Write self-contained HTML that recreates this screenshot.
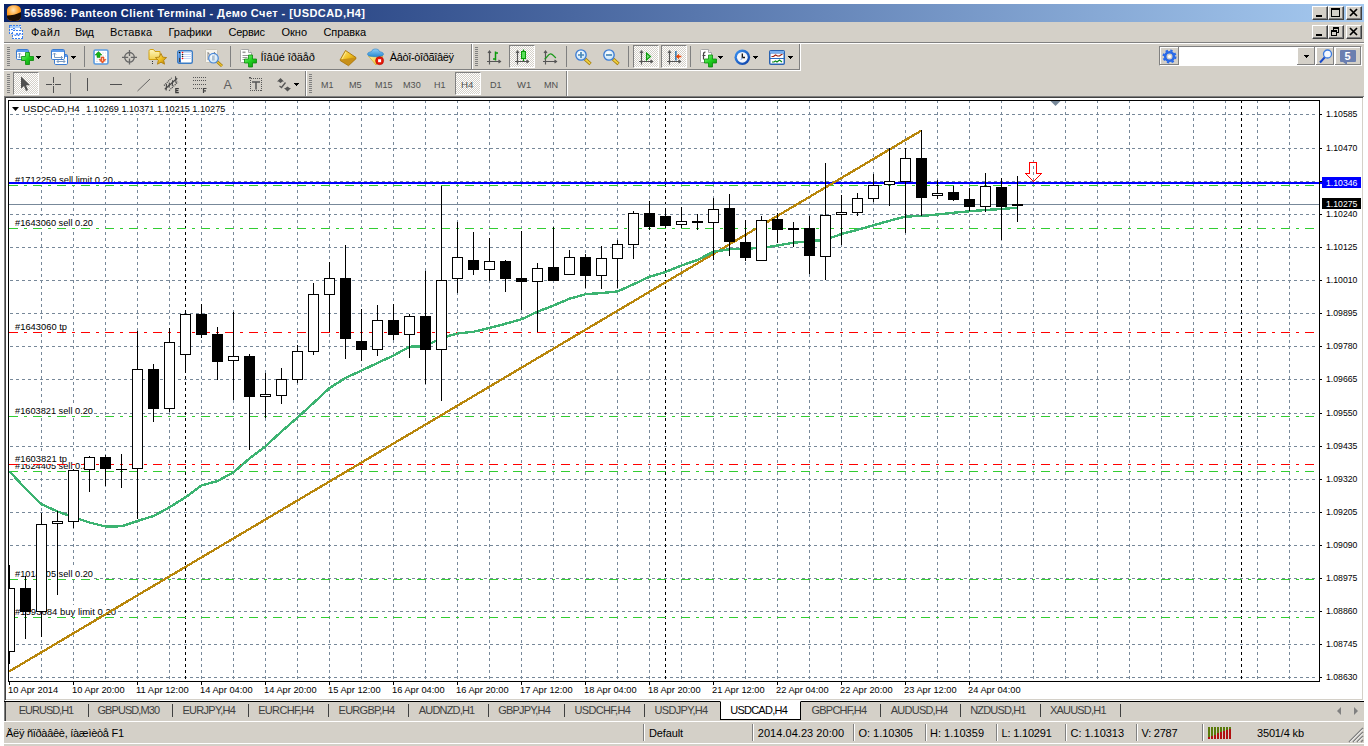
<!DOCTYPE html><html lang="ru"><head><meta charset="utf-8"><title>565896: Panteon Client Terminal</title><style>
html,body{margin:0;padding:0}
body{width:1368px;height:746px;background:#fff;overflow:hidden;position:relative;font-family:"Liberation Sans",sans-serif}
.win{position:absolute;left:4px;top:4px;width:1360px;height:742px;background:#d4d0c8}
.t{position:absolute;white-space:pre;line-height:1;font-family:"Liberation Sans",sans-serif}
.abs{position:absolute}
.title{position:absolute;left:4px;top:4px;width:1360px;height:18px;background:linear-gradient(to right,#0a246a 0%,#0a246a 2%,#a6caf0 100%)}
.btn{position:absolute;width:16px;height:14px;background:#d4d0c8;box-sizing:border-box;border:1px solid;border-color:#fff #404040 #404040 #fff;box-shadow:inset -1px -1px 0 #808080}
.hl{position:absolute;height:1px}
.vl{position:absolute;width:1px}
.grip{position:absolute;width:3px;background:repeating-linear-gradient(to bottom,#808080 0,#808080 1px,#d4d0c8 1px,#d4d0c8 2px)}
.chk{position:absolute;box-sizing:border-box;background:repeating-conic-gradient(#fff 0 25%,#d4d0c8 0 50%) 0 0/2px 2px;border:1px solid;border-color:#808080 #fff #fff #808080}
.chart{position:absolute;left:0;top:0}
.arr{position:absolute;width:5px;height:3px;background:linear-gradient(#000,#000) 0 0/5px 1px no-repeat,linear-gradient(#000,#000) 1px 1px/3px 1px no-repeat,linear-gradient(#000,#000) 2px 2px/1px 1px no-repeat}
.sep{position:absolute;width:1px;background:#808080;box-shadow:1px 0 0 #fff}
svg.ic{position:absolute;overflow:visible}
</style></head><body>
<div class="win"></div>
<svg width="0" height="0" style="position:absolute"><defs>
<linearGradient id="gGreen" x1="0" y1="0" x2="1" y2="1"><stop offset="0" stop-color="#8cf58c"/><stop offset=".5" stop-color="#1fd01f"/><stop offset="1" stop-color="#0a8f0a"/></linearGradient>
<linearGradient id="gGold" x1="0" y1="0" x2="1" y2="1"><stop offset="0" stop-color="#ffe98a"/><stop offset=".5" stop-color="#f0c020"/><stop offset="1" stop-color="#b07a08"/></linearGradient>
<linearGradient id="gBlueV" x1="0" y1="0" x2="0" y2="1"><stop offset="0" stop-color="#6aa8ee"/><stop offset="1" stop-color="#2a6ac4"/></linearGradient>
<radialGradient id="gLens" cx=".4" cy=".35" r=".7"><stop offset="0" stop-color="#ffffff"/><stop offset="1" stop-color="#bfe0f8"/></radialGradient>
<radialGradient id="gOrange" cx=".45" cy=".3" r=".7"><stop offset="0" stop-color="#ffe4b8"/><stop offset=".6" stop-color="#ff9c20"/><stop offset="1" stop-color="#f07800"/></radialGradient>
<linearGradient id="gClock" x1="0" y1="0" x2="1" y2="1"><stop offset="0" stop-color="#3a96f8"/><stop offset="1" stop-color="#0a3aa0"/></linearGradient>
<linearGradient id="gHat" x1="0" y1="0" x2="0" y2="1"><stop offset="0" stop-color="#8fd0f8"/><stop offset="1" stop-color="#2a8ad0"/></linearGradient>
<linearGradient id="gFace" x1="0" y1="0" x2="1" y2="1"><stop offset="0" stop-color="#fff3a0"/><stop offset="1" stop-color="#e8b818"/></linearGradient>
<linearGradient id="gFolder" x1="0" y1="0" x2="0" y2="1"><stop offset="0" stop-color="#fff8c0"/><stop offset="1" stop-color="#f0d050"/></linearGradient>
</defs></svg>
<div class="title"></div>
<svg class="ic" style="left:6px;top:5px" width="16" height="17" viewBox="0 0 16 17"><path d="M1 5.5C1 2 4 .3 8 .3s7 1.700 7 5.200v6.500c0 2.500-3 4-7 4s-7-1.500-7-4z" fill="url(#gOrange)"/><path d="M1 10.500C5 10.500 11 9.500 15 7v5c0 2.500-3 4-7 4s-7-1.500-7-4z" fill="#1c0e04"/></svg>
<span class="t" style="left:24.00px;top:8px;font-size:11px;color:#fff;letter-spacing:0.432px;font-weight:bold;">565896: Panteon Client Terminal - Демо Счет - [USDCAD,H4]</span>
<div class="btn" style="left:1312px;top:6px"></div><svg class="ic" style="left:1312px;top:6px" width="16" height="14" viewBox="0 0 16 14"><rect x="4" y="9" width="6" height="2" fill="#000" shape-rendering="crispEdges"/></svg>
<div class="btn" style="left:1328px;top:6px"></div><svg class="ic" style="left:1328px;top:6px" width="16" height="14" viewBox="0 0 16 14"><g shape-rendering="crispEdges"><rect x="3.500" y="2.500" width="8" height="8" fill="none" stroke="#000"/><rect x="3" y="2" width="9" height="2" fill="#000"/></g></svg>
<div class="btn" style="left:1346px;top:6px"></div><svg class="ic" style="left:1346px;top:6px" width="16" height="14" viewBox="0 0 16 14"><path d="M4 3l7 7m0-7l-7 7" stroke="#000" stroke-width="1.700" fill="none"/></svg>
<svg class="ic" style="left:8px;top:24px" width="15" height="15" viewBox="0 0 15 15"><g shape-rendering="crispEdges"><rect x="1.500" y="1.500" width="11" height="8" fill="#f4f8ff" stroke="#3a80f0" stroke-dasharray="2 1"/><rect x="2" y="2" width="10" height="2" fill="#a8ccf8"/><rect x="4.500" y="6.500" width="10" height="8" fill="#fff" stroke="#3a80f0" stroke-dasharray="2 1"/></g><path d="M6 10.500l1.500 1.500l1.500-3l1.500 3l1.500-3l1 1.500" fill="none" stroke="#2a70f0" stroke-width="1"/><path d="M3 5.500h1.500l1.500-1.500l1 1.500" fill="none" stroke="#2a70f0" stroke-width="1"/></svg>
<span class="t" style="left:31.00px;top:27px;font-size:11px;color:#000;letter-spacing:0.652px;">Файл</span>
<span class="t" style="left:75.00px;top:27px;font-size:11px;color:#000;letter-spacing:-0.450px;">Вид</span>
<span class="t" style="left:110.00px;top:27px;font-size:11px;color:#000;letter-spacing:0.186px;">Вставка</span>
<span class="t" style="left:168.50px;top:27px;font-size:11px;color:#000;letter-spacing:-0.038px;">Графики</span>
<span class="t" style="left:228.50px;top:27px;font-size:11px;color:#000;letter-spacing:-0.233px;">Сервис</span>
<span class="t" style="left:281.50px;top:27px;font-size:11px;color:#000;letter-spacing:-0.020px;">Окно</span>
<span class="t" style="left:323.50px;top:27px;font-size:11px;color:#000;letter-spacing:-0.109px;">Справка</span>
<div class="btn" style="left:1312px;top:25px"></div><svg class="ic" style="left:1312px;top:25px" width="16" height="14" viewBox="0 0 16 14"><rect x="4" y="9" width="6" height="2" fill="#000" shape-rendering="crispEdges"/></svg>
<div class="btn" style="left:1328px;top:25px"></div><svg class="ic" style="left:1328px;top:25px" width="16" height="14" viewBox="0 0 16 14"><g shape-rendering="crispEdges" fill="none" stroke="#000"><rect x="5.500" y="2.500" width="5" height="5"/><rect x="5" y="2" width="6" height="2" fill="#000" stroke="none"/><rect x="3.500" y="5.500" width="5" height="5" fill="#d4d0c8"/><rect x="3" y="5" width="6" height="2" fill="#000" stroke="none"/></g></svg>
<div class="btn" style="left:1346px;top:25px"></div><svg class="ic" style="left:1346px;top:25px" width="16" height="14" viewBox="0 0 16 14"><path d="M4 3l7 7m0-7l-7 7" stroke="#000" stroke-width="1.700" fill="none"/></svg>
<div class="hl" style="left:4px;top:42px;width:1360px;background:#808080"></div><div class="hl" style="left:4px;top:43px;width:1360px;background:#fff"></div>
<div class="hl" style="left:4px;top:69px;width:796px;background:#808080"></div><div class="hl" style="left:4px;top:70px;width:797px;background:#fff"></div>
<div class="vl" style="left:799px;top:44px;height:26px;background:#808080"></div><div class="vl" style="left:800px;top:44px;height:27px;background:#fff"></div>
<div class="grip" style="left:7px;top:47px;height:19px"></div>
<div class="sep" style="left:471px;top:44px;height:25px"></div>
<div class="grip" style="left:475px;top:47px;height:19px"></div>
<div class="sep" style="left:84px;top:46px;height:21px;box-shadow:none"></div>
<div class="sep" style="left:230px;top:46px;height:21px;box-shadow:none"></div>
<div class="sep" style="left:566px;top:46px;height:21px;box-shadow:none"></div>
<div class="sep" style="left:628px;top:46px;height:21px;box-shadow:none"></div>
<div class="sep" style="left:690px;top:46px;height:21px;box-shadow:none"></div>
<div class="chk" style="left:509px;top:45px;width:26px;height:23px"></div>
<div class="chk" style="left:633px;top:45px;width:26px;height:23px"></div>
<div class="chk" style="left:661px;top:45px;width:26px;height:23px"></div>
<svg class="ic" style="left:16px;top:49px" width="18" height="16" viewBox="0 0 18 16"><rect x="0.5" y="0.5" width="12" height="10" rx="1.200" fill="#fff" stroke="#3a7bd0"/><rect x="1" y="1" width="11" height="2" fill="#5a9aee"/><path d="M3.500 4v5M2 5.500l1.500-1.500l1.500 1.500M2 7.500l1.500 1.500l1.500-1.500" stroke="#7a9ac0" fill="none"/><path d="M9.5 3.5h4v4h4v4h-4v4h-4v-4h-4v-4h4z" fill="url(#gGreen)" stroke="#0a8a0a" stroke-width=".8"/></svg>
<svg class="ic" style="left:51px;top:49px" width="18" height="16" viewBox="0 0 18 16"><rect x="3.5" y="5.5" width="13" height="10" rx="1.200" fill="#fff" stroke="#3a7bd0"/><rect x="4" y="6" width="12" height="2" fill="#5a9aee"/><path d="M6 12.500h8M7.500 11l-1.500 1.500l1.500 1.500M12.500 11l1.500 1.500l-1.500 1.500" stroke="#7a9ac0" fill="none"/><rect x="0.5" y="0.5" width="13" height="10" rx="1.200" fill="#fff" stroke="#3a7bd0"/><rect x="1" y="1" width="12" height="2" fill="#5a9aee"/><path d="M3.500 4v4.500M2 5.500l1.500-1.500l1.500 1.500M3.500 8.500h8M10 7l1.500 1.500l-1.500 1.500" stroke="#7a9ac0" fill="none"/></svg>
<svg class="ic" style="left:93px;top:49px" width="16" height="16" viewBox="0 0 16 16"><rect x="1" y="1" width="14" height="14" rx="1.500" fill="#fff" stroke="#5a9be0" stroke-width="1.600"/><path d="M3 4h10M3 7h10M3 10h10M3 12.500h10" stroke="#dde0e4" stroke-width="1" stroke-dasharray="2 1"/><path d="M5.500 2.500l3.500 3.500h-2v2.500h-3v-2.500h-2z" fill="#18b018" stroke="#0a8a0a" stroke-width=".5"/><path d="M9.500 14.200l-3.500-3.700h2v-2.500h3v2.500h2z" fill="#f06030" stroke="#d04010" stroke-width=".5"/><path d="M9.500 9v3" stroke="#ffc8a8" stroke-width="1"/></svg>
<svg class="ic" style="left:122px;top:49px" width="16" height="16" viewBox="0 0 16 16"><circle cx="7.500" cy="8.300" r="4.800" fill="none" stroke="#666" stroke-width="1.300"/><path d="M7.500 1v6M7.500 9.600v6M0 8.300h6.200M8.800 8.300h6.200" stroke="#666" stroke-width="1.300"/></svg>
<svg class="ic" style="left:148px;top:48px" width="19" height="18" viewBox="0 0 19 18"><path d="M1 3.500c0-1.500.5-2 2-2h2.500l1.500 2h5v8h-11z" fill="url(#gFolder)" stroke="#d0a010" stroke-width="1"/><path d="M4.500 13v1M4.500 15v1" stroke="#333" stroke-width="1"/><path d="M13 5.500l1.700 3.600l3.900.5l-2.900 2.700l.8 3.900l-3.500-2l-3.500 2l.8-3.900l-2.900-2.700l3.900-.5z" fill="url(#gGold)" stroke="#b08010" stroke-width=".9"/></svg>
<svg class="ic" style="left:177px;top:50px" width="16" height="14" viewBox="0 0 16 14"><rect x=".7" y=".7" width="14.600" height="12.600" rx="1.500" fill="#fff" stroke="#3b7cc4" stroke-width="1.400"/><rect x="1.400" y="1.400" width="2.600" height="11.200" fill="url(#gBlueV)"/><rect x="2" y="8" width="1" height="4" fill="#444"/><path d="M5 2.500h9.500M5 4.500h9.500M5 6.500h9.500M5 8.500h9.500" stroke="#c8d8f8" stroke-width="1"/><circle cx="2.500" cy="2.500" r=".8" fill="#000"/><circle cx="5.500" cy="2.500" r=".8" fill="#f00"/><circle cx="5.500" cy="4.500" r=".8" fill="#222"/><circle cx="5.500" cy="6.500" r=".8" fill="#222"/><circle cx="5.500" cy="8.500" r=".8" fill="#f00"/></svg>
<svg class="ic" style="left:205px;top:49px" width="18" height="18" viewBox="0 0 18 18"><rect x=".5" y=".5" width="12" height="13" rx="1" fill="#f6f4ee" stroke="#c8c4b8"/><path d="M3 3v8M3 4l2 1.500M9.500 3v8M9.500 4l2 1.500" stroke="#888" fill="none"/><path d="M12 12.500l5 4.500" stroke="#a07808" stroke-width="3"/><path d="M12 12.500l5 4.500" stroke="#e8c030" stroke-width="1.600"/><circle cx="8.500" cy="9.200" r="4.800" fill="url(#gLens)" fill-opacity=".85" stroke="#4a88d8" stroke-width="1.200"/><rect x="7" y="6.500" width="2.500" height="5" fill="#9ab0c8" opacity=".8"/></svg>
<svg class="ic" style="left:240px;top:49px" width="17" height="18" viewBox="0 0 17 18"><path d="M.5 1.500c0-.6.400-1 1-1h7l3 3v9c0 .6-.4 1-1 1h-9c-.6 0-1-.4-1-1z" fill="#fff" stroke="#a8a8a8"/><path d="M8.500 .5v3h3" fill="#e8e8e8" stroke="#a8a8a8"/><rect x="2.500" y="2.500" width="3" height="1.600" fill="#999"/><path d="M2.500 6.500h6M2.500 8.500h5M2.500 10.500h4" stroke="#999"/><path d="M8.5 6h4v4h4v4h-4v4h-4v-4h-4v-4h4z" fill="url(#gGreen)" stroke="#0a8a0a" stroke-width=".8"/></svg>
<svg class="ic" style="left:340px;top:50px" width="17" height="16" viewBox="0 0 17 16"><path d="M5.500 .5l10.500 7l-7.500 7l-8.200-5z" fill="url(#gGold)" stroke="#a87408" stroke-width=".9"/><path d="M16 7.500v1.200l-7.500 7l-8.200-5v-1.200" fill="#c89018" stroke="#a87408" stroke-width=".8"/><path d="M6 2l-4 7" stroke="#fff4b0" stroke-width="1" opacity=".7"/></svg>
<svg class="ic" style="left:367px;top:48px" width="18" height="18" viewBox="0 0 18 18"><path d="M1.500 8h14.500l-7 9z" fill="url(#gFace)" stroke="#d0a010" stroke-width=".6"/><path d="M.5 6.200c0-1.800 2.500-2.200 4-2.700c.5-1.800 2-2.500 4-2.500s3.500.7 4 2.500c1.500.5 4 .9 4 2.700c0 1.800-3.500 2.500-8 2.500s-8-.7-8-2.500z" fill="url(#gHat)" stroke="#2a80c8" stroke-width=".6"/><circle cx="12.600" cy="12.700" r="4" fill="#e81808" stroke="#b00800" stroke-width=".6"/><rect x="11.100" y="11.200" width="3" height="3" fill="#fff"/></svg>
<svg class="ic" style="left:487px;top:50px" width="15" height="15" viewBox="0 0 15 15"><path d="M2.500 14.500V1M1 3l1.500-2l1.500 2M0 11.500h13.500M11.500 10l2 1.500l-2 1.500" fill="none" stroke="#555" stroke-width="1.150"/><path d="M8.500 1.500v9M8.500 3h2.500M6 9h2.500" fill="none" stroke="#0a9a0a" stroke-width="1.500"/></svg>
<svg class="ic" style="left:515px;top:49px" width="15" height="16" viewBox="0 0 15 16"><g transform="translate(0,1)"><path d="M2.500 14.500V1M1 3l1.500-2l1.500 2M0 11.500h13.500M11.500 10l2 1.500l-2 1.500" fill="none" stroke="#555" stroke-width="1.150"/></g><path d="M8.500 .5v11.500" stroke="#0a9a0a" stroke-width="1.300"/><rect x="6.500" y="2.500" width="4" height="7" fill="#5ae05a" stroke="#0a9a0a" stroke-width="1"/></svg>
<svg class="ic" style="left:543px;top:50px" width="15" height="15" viewBox="0 0 15 15"><path d="M2.500 14.500V1M1 3l1.500-2l1.500 2M0 11.500h13.500M11.500 10l2 1.500l-2 1.500" fill="none" stroke="#555" stroke-width="1.150"/><path d="M1.500 9c2.500-1 3.500-5 6-5.200s3 3 5.500 4" fill="none" stroke="#1a9a1a" stroke-width="1.300"/></svg>
<svg class="ic" style="left:575px;top:49px" width="17" height="17" viewBox="0 0 17 17"><path d="M10 10l5.500 5" stroke="#a07808" stroke-width="3.400"/><path d="M10.500 10.500l4.700 4.200" stroke="#f0d040" stroke-width="1.800"/><circle cx="6" cy="6" r="5.200" fill="url(#gLens)" stroke="#3a7bd4" stroke-width="1.300"/><path d="M3 6h6M6 3v6" stroke="#4a88b8" stroke-width="1.700"/></svg>
<svg class="ic" style="left:603px;top:49px" width="17" height="17" viewBox="0 0 17 17"><path d="M10 10l5.500 5" stroke="#a07808" stroke-width="3.400"/><path d="M10.500 10.500l4.700 4.200" stroke="#f0d040" stroke-width="1.800"/><circle cx="6" cy="6" r="5.200" fill="url(#gLens)" stroke="#3a7bd4" stroke-width="1.300"/><path d="M3 6h6" stroke="#4a88b8" stroke-width="1.700"/></svg>
<svg class="ic" style="left:639px;top:50px" width="15" height="15" viewBox="0 0 15 15"><path d="M2.500 14.500V1M1 3l1.500-2l1.500 2M0 11.500h13.500M11.500 10l2 1.500l-2 1.500" fill="none" stroke="#555" stroke-width="1.150"/><path d="M7.500 3l4 3.500l-4 3.500z" fill="#7ae07a" stroke="#0a9a0a" stroke-width="1.100"/></svg>
<svg class="ic" style="left:667px;top:50px" width="15" height="15" viewBox="0 0 15 15"><path d="M2.500 14.500V1M1 3l1.500-2l1.500 2M0 11.500h13.500M11.500 10l2 1.500l-2 1.500" fill="none" stroke="#555" stroke-width="1.150"/><path d="M8.900 1v9.500" stroke="#1a6aa8" stroke-width="1.400"/><path d="M9.800 6.500h4.500M12 4.500l-2.200 2l2.200 2" fill="none" stroke="#e84808" stroke-width="1.300"/></svg>
<svg class="ic" style="left:700px;top:49px" width="17" height="18" viewBox="0 0 17 18"><path d="M.5 1.500c0-.6.400-1 1-1h7l3 3v9c0 .6-.4 1-1 1h-9c-.6 0-1-.4-1-1z" fill="#fff" stroke="#a8a8a8"/><path d="M8.500 .5v3h3" fill="#e8e8e8" stroke="#a8a8a8"/><path d="M5.500 3c-2 0-2 1-2 2.500v5" fill="none" stroke="#444" stroke-width="1.200"/><path d="M2.500 6.500h3" stroke="#444"/><path d="M8.5 6h4v4h4v4h-4v4h-4v-4h-4v-4h4z" fill="url(#gGreen)" stroke="#0a8a0a" stroke-width=".8"/></svg>
<svg class="ic" style="left:734px;top:49px" width="17" height="17" viewBox="0 0 17 17"><circle cx="8.300" cy="8.300" r="7.800" fill="url(#gClock)"/><circle cx="8.300" cy="8.300" r="5.400" fill="#f4f6fa"/><path d="M8.300 4.500v4h2.700" fill="none" stroke="#111" stroke-width="1.300"/><path d="M8.300 8.500l-1.500 2.500" stroke="#6a9ae8" stroke-width=".8"/></svg>
<svg class="ic" style="left:769px;top:50px" width="16" height="15" viewBox="0 0 16 15"><rect x=".5" y=".5" width="15" height="14" rx="1" fill="#2a6ac0" stroke="#2a62b0"/><rect x="1" y="1" width="14" height="2" fill="#7ab0f0"/><rect x="1.500" y="3.500" width="13" height="4.500" fill="#fff"/><rect x="1.500" y="9" width="13" height="4.500" fill="#fff"/><path d="M2.500 6.500h2l2-1.500l2 1h2l2-1.500h1" fill="none" stroke="#a02010" stroke-width="1.200"/><path d="M3 12h2l1.500-1l1.500 1l2.500-2l2.500 2" fill="none" stroke="#0a8a1a" stroke-width="1.200"/></svg>
<div class="arr" style="left:36px;top:56px"></div>
<div class="arr" style="left:71px;top:56px"></div>
<div class="arr" style="left:718px;top:56px"></div>
<div class="arr" style="left:753px;top:56px"></div>
<div class="arr" style="left:788px;top:56px"></div>
<span class="t" style="left:260.60px;top:52px;font-size:11px;color:#000;letter-spacing:-0.065px;">Íîâûé îðäåð</span>
<span class="t" style="left:389.80px;top:52px;font-size:11px;color:#000;letter-spacing:-0.358px;">Àâòî-òîðãîâëÿ</span>
<div class="abs" style="left:1159px;top:46px;width:203px;height:20px;background:#fff;box-sizing:border-box;border:1px solid;border-color:#808080 #fff #fff #808080"></div>
<div class="abs" style="left:1160px;top:47px;width:19px;height:18px;background:#d4d0c8;box-shadow:inset -1px -1px 0 #808080,inset 1px 1px 0 #fff"></div>
<div class="abs" style="left:1297px;top:47px;width:18px;height:18px;background:#d4d0c8;box-shadow:inset -1px -1px 0 #808080,inset 1px 1px 0 #fff"></div>
<div class="abs" style="left:1316px;top:47px;width:18px;height:18px;background:#d4d0c8;box-shadow:inset -1px -1px 0 #808080,inset 1px 1px 0 #fff"></div>
<div class="abs" style="left:1335px;top:47px;width:26px;height:18px;background:#d4d0c8;box-shadow:inset -1px -1px 0 #808080,inset 1px 1px 0 #fff"></div>
<div class="arr" style="left:1304px;top:55px"></div>
<svg class="ic" style="left:1162px;top:49px" width="15" height="15" viewBox="0 0 15 15"><circle cx="7.500" cy="7.500" r="4.300" fill="none" stroke="#2a6ae8" stroke-width="2.600"/><circle cx="7.500" cy="7.500" r="6" fill="none" stroke="#2a6ae8" stroke-width="2" stroke-dasharray="2.360 2.360"/><circle cx="7.500" cy="7.500" r="1.600" fill="#fff"/></svg>
<svg class="ic" style="left:1319px;top:49px" width="14" height="14" viewBox="0 0 14 14"><path d="M6.500 7.500l-5.500 6" stroke="#1a4ac8" stroke-width="2"/><circle cx="8.500" cy="5" r="4" fill="#f4f8ff" stroke="#3a7be0" stroke-width="1.300"/></svg>
<div class="abs" style="left:1340px;top:50px;width:16px;height:12px;background:#6b7fb0;border-radius:1px"></div>
<div class="abs" style="left:1343px;top:62px;width:0;height:0;border-top:3px solid #6b7fb0;border-left:4px solid transparent"></div>
<span class="t" style="left:1344.50px;top:51px;font-size:11px;color:#fff;font-weight:bold;">5</span>
<div class="grip" style="left:7px;top:74px;height:19px"></div>
<div class="chk" style="left:13px;top:72px;width:26px;height:23px"></div>
<div class="sep" style="left:70px;top:73px;height:21px;box-shadow:none"></div>
<div class="sep" style="left:305px;top:71px;height:25px"></div>
<div class="grip" style="left:309px;top:74px;height:19px"></div>
<div class="chk" style="left:455px;top:72px;width:26px;height:23px"></div>
<div class="sep" style="left:566px;top:71px;height:25px"></div>
<svg class="ic" style="left:20px;top:76px" width="10" height="16" viewBox="0 0 10 16"><path d="M1 .5v12l3-2.500l2 5l2-.9l-2-4.800h4z" fill="#505050"/></svg>
<svg class="ic" style="left:46px;top:77px" width="16" height="16" viewBox="0 0 16 16"><path d="M7.500 0v6M7.500 9v6.500M0 7.500h6M9 7.500h6M7 7.500h1" stroke="#505050" stroke-width="1" fill="none" shape-rendering="crispEdges"/></svg>
<svg class="ic" style="left:87px;top:78px" width="2" height="13" viewBox="0 0 2 13"><rect x="0" y="0" width="1" height="13" fill="#505050" shape-rendering="crispEdges"/></svg>
<svg class="ic" style="left:110px;top:84px" width="12" height="2" viewBox="0 0 12 2"><rect x="0" y="0" width="12" height="1" fill="#505050" shape-rendering="crispEdges"/></svg>
<svg class="ic" style="left:137px;top:79px" width="14" height="13" viewBox="0 0 14 13"><path d="M.5 12L13 0" stroke="#505050" stroke-width=".85"/></svg>
<svg class="ic" style="left:164px;top:76px" width="16" height="17" viewBox="0 0 16 17"><path d="M0 9.500L7.700 1.800M5.100 14.600L13.900 5.900" stroke="#444" stroke-width="1.200" stroke-dasharray="1.100 .900"/><path d="M.8 13.200L13.200 2.200" stroke="#4a4a4a" stroke-width="1.300"/><path d="M2.500 8l-.3 6.600M5.400 6.600l-.3 5.100M8.600 4.200l-.3 5.800M11.500 .2l.5 6.800" stroke="#4a4a4a" stroke-width="1.100"/><path d="M14.800 12.600h-3v4h3M11.800 14.600h2.600" stroke="#3a3a3a" stroke-width="1.200" fill="none"/></svg>
<svg class="ic" style="left:193px;top:77px" width="15" height="17" viewBox="0 0 15 17"><g fill="none" stroke="#555" stroke-width="1" stroke-dasharray="1 1" shape-rendering="crispEdges"><path d="M0 .5h13M0 3.500h13M0 7.500h13M0 11.500h9"/></g><path d="M10.500 16v-4.500h3M10.500 13.800h2.500" stroke="#444" stroke-width="1.200" fill="none"/></svg>
<svg class="ic" style="left:249px;top:77px" width="13" height="14" viewBox="0 0 13 14"><rect x="1.500" y="1.500" width="11" height="12" fill="none" stroke="#555" stroke-dasharray="1 1" shape-rendering="crispEdges"/><rect x="0" y="0" width="2" height="1.500" fill="#555"/><path d="M3 5h8M7 5v7.500" stroke="#555" stroke-width="1.500" fill="none"/></svg>
<svg class="ic" style="left:277px;top:78px" width="15" height="14" viewBox="0 0 15 14"><path d="M3.500 0l3.500 3.500h-1.500l-2 1.500l-2-1.500h-1.500z" fill="#555"/><path d="M10.500 13.500l-3.500-3.500h1.500l2-1.500l2 1.500h1.500z" fill="#555"/><path d="M2.500 8l2 1.500l4-5" fill="none" stroke="#555" stroke-width="1.300"/></svg>
<span class="t" style="left:223.50px;top:79px;font-size:12.5px;color:#606060;">A</span>
<div class="arr" style="left:294px;top:83px"></div>
<span class="t" style="left:320.60px;top:80px;font-size:10px;color:#505050;transform:scale(0.8926,0.98);transform-origin:0 8px;">M1</span>
<span class="t" style="left:348.50px;top:80px;font-size:10px;color:#505050;transform:scale(0.9142,0.98);transform-origin:0 8px;">M5</span>
<span class="t" style="left:374.60px;top:80px;font-size:10px;color:#505050;transform:scale(0.9047,0.98);transform-origin:0 8px;">M15</span>
<span class="t" style="left:402.50px;top:80px;font-size:10px;color:#505050;transform:scale(0.9099,0.98);transform-origin:0 8px;">M30</span>
<span class="t" style="left:433.50px;top:80px;font-size:10px;color:#505050;transform:scale(0.8996,0.98);transform-origin:0 8px;">H1</span>
<span class="t" style="left:460.60px;top:80px;font-size:10px;color:#505050;transform:scale(0.9700,0.98);transform-origin:0 8px;">H4</span>
<span class="t" style="left:489.60px;top:80px;font-size:10px;color:#505050;transform:scale(0.9074,0.98);transform-origin:0 8px;">D1</span>
<span class="t" style="left:517.00px;top:80px;font-size:10px;color:#505050;transform:scale(0.9467,0.98);transform-origin:0 8px;">W1</span>
<span class="t" style="left:543.80px;top:80px;font-size:10px;color:#505050;transform:scale(0.9131,0.98);transform-origin:0 8px;">MN</span>
<svg class="chart" width="1368" height="746" viewBox="0 0 1368 746" shape-rendering="crispEdges" font-family="'Liberation Sans', sans-serif">
<rect x="4" y="96" width="1360" height="606" fill="#fff"/>
<rect x="4" y="96" width="1360" height="1" fill="#808080"/><rect x="4" y="96" width="1" height="605" fill="#808080"/>
<rect x="5" y="97" width="1358" height="1" fill="#404040"/><rect x="5" y="97" width="1" height="603" fill="#404040"/>
<rect x="1362" y="98" width="1" height="602" fill="#d4d0c8"/><rect x="6" y="699" width="1357" height="1" fill="#d4d0c8"/>
<g stroke="#778899" stroke-width="1" stroke-dasharray="3 3" fill="none">
<line x1="10" y1="114.5" x2="1315" y2="114.5"/>
<line x1="10" y1="148.5" x2="1315" y2="148.5"/>
<line x1="10" y1="181.5" x2="1315" y2="181.5"/>
<line x1="10" y1="214.5" x2="1315" y2="214.5"/>
<line x1="10" y1="247.5" x2="1315" y2="247.5"/>
<line x1="10" y1="280.5" x2="1315" y2="280.5"/>
<line x1="10" y1="313.5" x2="1315" y2="313.5"/>
<line x1="10" y1="346.5" x2="1315" y2="346.5"/>
<line x1="10" y1="379.5" x2="1315" y2="379.5"/>
<line x1="10" y1="413.5" x2="1315" y2="413.5"/>
<line x1="10" y1="446.5" x2="1315" y2="446.5"/>
<line x1="10" y1="479.5" x2="1315" y2="479.5"/>
<line x1="10" y1="512.5" x2="1315" y2="512.5"/>
<line x1="10" y1="545.5" x2="1315" y2="545.5"/>
<line x1="10" y1="578.5" x2="1315" y2="578.5"/>
<line x1="10" y1="611.5" x2="1315" y2="611.5"/>
<line x1="10" y1="644.5" x2="1315" y2="644.5"/>
<line x1="10" y1="677.5" x2="1315" y2="677.5"/>
<line x1="41.5" y1="100" x2="41.5" y2="681"/>
<line x1="73.5" y1="100" x2="73.5" y2="681"/>
<line x1="105.5" y1="100" x2="105.5" y2="681"/>
<line x1="137.5" y1="100" x2="137.5" y2="681"/>
<line x1="169.5" y1="100" x2="169.5" y2="681"/>
<line x1="201.5" y1="100" x2="201.5" y2="681"/>
<line x1="233.5" y1="100" x2="233.5" y2="681"/>
<line x1="265.5" y1="100" x2="265.5" y2="681"/>
<line x1="297.5" y1="100" x2="297.5" y2="681"/>
<line x1="329.5" y1="100" x2="329.5" y2="681"/>
<line x1="361.5" y1="100" x2="361.5" y2="681"/>
<line x1="393.5" y1="100" x2="393.5" y2="681"/>
<line x1="425.5" y1="100" x2="425.5" y2="681"/>
<line x1="457.5" y1="100" x2="457.5" y2="681"/>
<line x1="489.5" y1="100" x2="489.5" y2="681"/>
<line x1="521.5" y1="100" x2="521.5" y2="681"/>
<line x1="553.5" y1="100" x2="553.5" y2="681"/>
<line x1="585.5" y1="100" x2="585.5" y2="681"/>
<line x1="617.5" y1="100" x2="617.5" y2="681"/>
<line x1="649.5" y1="100" x2="649.5" y2="681"/>
<line x1="681.5" y1="100" x2="681.5" y2="681"/>
<line x1="713.5" y1="100" x2="713.5" y2="681"/>
<line x1="745.5" y1="100" x2="745.5" y2="681"/>
<line x1="777.5" y1="100" x2="777.5" y2="681"/>
<line x1="809.5" y1="100" x2="809.5" y2="681"/>
<line x1="841.5" y1="100" x2="841.5" y2="681"/>
<line x1="873.5" y1="100" x2="873.5" y2="681"/>
<line x1="905.5" y1="100" x2="905.5" y2="681"/>
<line x1="937.5" y1="100" x2="937.5" y2="681"/>
<line x1="969.5" y1="100" x2="969.5" y2="681"/>
<line x1="1001.5" y1="100" x2="1001.5" y2="681"/>
<line x1="1033.5" y1="100" x2="1033.5" y2="681"/>
<line x1="1065.5" y1="100" x2="1065.5" y2="681"/>
<line x1="1097.5" y1="100" x2="1097.5" y2="681"/>
<line x1="1129.5" y1="100" x2="1129.5" y2="681"/>
<line x1="1161.5" y1="100" x2="1161.5" y2="681"/>
<line x1="1193.5" y1="100" x2="1193.5" y2="681"/>
<line x1="1225.5" y1="100" x2="1225.5" y2="681"/>
<line x1="1257.5" y1="100" x2="1257.5" y2="681"/>
<line x1="1289.5" y1="100" x2="1289.5" y2="681"/>
</g>
<g stroke="#000" stroke-width="1" stroke-dasharray="3 3" fill="none">
<line x1="185.5" y1="100" x2="185.5" y2="681"/>
<line x1="665.5" y1="100" x2="665.5" y2="681"/>
<line x1="1241.5" y1="100" x2="1241.5" y2="681"/>
</g>
<rect x="9" y="101" width="218" height="13" fill="#fff"/>
<rect x="9" y="204" width="1310" height="1" fill="#778899"/>
<g font-size="10" fill="#000">
<rect x="10" y="173" width="104" height="12" fill="#fff"/><text x="15" y="183" textLength="98" lengthAdjust="spacingAndGlyphs" transform="translate(0,183) scale(1,.98) translate(0,-183)">#1712259 sell limit 0.20</text>
<rect x="10" y="216" width="84" height="12" fill="#fff"/><text x="15" y="226" textLength="78" lengthAdjust="spacingAndGlyphs" transform="translate(0,226) scale(1,.98) translate(0,-226)">#1643060 sell 0.20</text>
<rect x="10" y="320" width="58" height="12" fill="#fff"/><text x="15" y="330" textLength="52" lengthAdjust="spacingAndGlyphs" transform="translate(0,330) scale(1,.98) translate(0,-330)">#1643060 tp</text>
<rect x="10" y="404" width="84" height="12" fill="#fff"/><text x="15" y="414" textLength="78" lengthAdjust="spacingAndGlyphs" transform="translate(0,414) scale(1,.98) translate(0,-414)">#1603821 sell 0.20</text>
<rect x="10" y="459" width="84" height="12" fill="#fff"/><text x="15" y="469" textLength="78" lengthAdjust="spacingAndGlyphs" transform="translate(0,469) scale(1,.98) translate(0,-469)">#1624405 sell 0.20</text>
<rect x="10" y="452" width="58" height="12" fill="#fff"/><text x="15" y="462" textLength="52" lengthAdjust="spacingAndGlyphs" transform="translate(0,462) scale(1,.98) translate(0,-462)">#1603821 tp</text>
<rect x="10" y="567" width="84" height="12" fill="#fff"/><text x="15" y="577" textLength="78" lengthAdjust="spacingAndGlyphs" transform="translate(0,577) scale(1,.98) translate(0,-577)">#1014405 sell 0.20</text>
<rect x="10" y="605" width="107" height="12" fill="#fff"/><text x="15" y="615" textLength="101" lengthAdjust="spacingAndGlyphs" transform="translate(0,615) scale(1,.98) translate(0,-615)">#1593684 buy limit 0.20</text>
</g>
<line x1="9" y1="185.5" x2="1315" y2="185.5" stroke="#32cd32" stroke-dasharray="9 6 3 6"/>
<line x1="9" y1="228.5" x2="1315" y2="228.5" stroke="#32cd32" stroke-dasharray="9 6 3 6"/>
<line x1="9" y1="332.5" x2="1315" y2="332.5" stroke="#ff0000" stroke-dasharray="9 6 3 6"/>
<line x1="9" y1="416.5" x2="1315" y2="416.5" stroke="#32cd32" stroke-dasharray="9 6 3 6"/>
<line x1="9" y1="464.5" x2="1315" y2="464.5" stroke="#ff0000" stroke-dasharray="9 6 3 6"/>
<line x1="9" y1="471.5" x2="1315" y2="471.5" stroke="#32cd32" stroke-dasharray="9 6 3 6"/>
<line x1="9" y1="579.5" x2="1315" y2="579.5" stroke="#32cd32" stroke-dasharray="9 6 3 6"/>
<line x1="9" y1="617.5" x2="1315" y2="617.5" stroke="#32cd32" stroke-dasharray="9 6 3 6"/>
<rect x="9" y="182" width="1311" height="2" fill="#0000ff"/>
<line x1="9" y1="671.5" x2="921.5" y2="130.5" stroke="#b8860b" stroke-width="2.300"/>
<polyline points="9.5,471.50 25.5,488.50 41.5,504.25 57.5,511.50 73.5,517.25 89.5,522.50 105.5,526.50 121.5,526.25 137.5,521.00 153.5,516.00 169.5,507.25 185.5,497.25 201.5,485.50 217.5,481.00 233.5,472.25 249.5,458.50 265.5,446.25 281.5,431.50 297.5,417.50 313.5,403.00 329.5,388.00 345.5,378.00 361.5,370.50 377.5,363.00 393.5,355.50 409.5,346.75 425.5,346.25 441.5,338.00 457.5,333.50 473.5,331.75 489.5,328.00 505.5,323.75 521.5,319.25 537.5,311.75 553.5,305.50 569.5,298.75 585.5,294.25 601.5,293.00 617.5,291.50 633.5,284.25 649.5,276.75 665.5,272.00 681.5,265.50 697.5,259.90 713.5,251.75 729.5,249.25 745.5,248.60 761.5,248.00 777.5,245.50 793.5,242.75 809.5,241.25 825.5,239.75 841.5,234.00 857.5,229.75 873.5,225.25 889.5,220.75 905.5,216.50 921.5,216.00 937.5,214.50 953.5,212.75 969.5,211.25 985.5,210.00 1001.5,209.00 1017.5,207.75" fill="none" stroke="#3cb371" stroke-width="2.400"/>
<clipPath id="cc"><rect x="9" y="101" width="1310" height="580"/></clipPath>
<g clip-path="url(#cc)">
<rect x="9" y="565" width="1" height="99" fill="#000"/>
<rect x="4" y="588" width="11" height="64" fill="#000"/>
<rect x="5" y="589" width="9" height="62" fill="#fff"/>
<rect x="25" y="576" width="1" height="63" fill="#000"/>
<rect x="20" y="588" width="11" height="24" fill="#000"/>
<rect x="41" y="513" width="1" height="124" fill="#000"/>
<rect x="36" y="524" width="11" height="88" fill="#000"/>
<rect x="37" y="525" width="9" height="86" fill="#fff"/>
<rect x="57" y="511" width="1" height="84" fill="#000"/>
<rect x="52" y="521" width="11" height="3" fill="#000"/>
<rect x="53" y="522" width="9" height="1" fill="#fff"/>
<rect x="73" y="469" width="1" height="59" fill="#000"/>
<rect x="68" y="470" width="11" height="52" fill="#000"/>
<rect x="69" y="471" width="9" height="50" fill="#fff"/>
<rect x="89" y="456" width="1" height="36" fill="#000"/>
<rect x="84" y="457" width="11" height="13" fill="#000"/>
<rect x="85" y="458" width="9" height="11" fill="#fff"/>
<rect x="105" y="455" width="1" height="31" fill="#000"/>
<rect x="100" y="457" width="11" height="12" fill="#000"/>
<rect x="121" y="454" width="1" height="34" fill="#000"/>
<rect x="116" y="469" width="11" height="1" fill="#000"/>
<rect x="137" y="331" width="1" height="188" fill="#000"/>
<rect x="132" y="369" width="11" height="100" fill="#000"/>
<rect x="133" y="370" width="9" height="98" fill="#fff"/>
<rect x="153" y="364" width="1" height="58" fill="#000"/>
<rect x="148" y="369" width="11" height="40" fill="#000"/>
<rect x="169" y="328" width="1" height="84" fill="#000"/>
<rect x="164" y="342" width="11" height="67" fill="#000"/>
<rect x="165" y="343" width="9" height="65" fill="#fff"/>
<rect x="185" y="310" width="1" height="62" fill="#000"/>
<rect x="180" y="314" width="11" height="41" fill="#000"/>
<rect x="181" y="315" width="9" height="39" fill="#fff"/>
<rect x="201" y="304" width="1" height="34" fill="#000"/>
<rect x="196" y="314" width="11" height="21" fill="#000"/>
<rect x="217" y="327" width="1" height="53" fill="#000"/>
<rect x="212" y="334" width="11" height="28" fill="#000"/>
<rect x="233" y="312" width="1" height="88" fill="#000"/>
<rect x="228" y="356" width="11" height="5" fill="#000"/>
<rect x="229" y="357" width="9" height="3" fill="#fff"/>
<rect x="249" y="354" width="1" height="96" fill="#000"/>
<rect x="244" y="356" width="11" height="41" fill="#000"/>
<rect x="265" y="373" width="1" height="45" fill="#000"/>
<rect x="260" y="394" width="11" height="3" fill="#000"/>
<rect x="261" y="395" width="9" height="1" fill="#fff"/>
<rect x="281" y="368" width="1" height="36" fill="#000"/>
<rect x="276" y="379" width="11" height="17" fill="#000"/>
<rect x="277" y="380" width="9" height="15" fill="#fff"/>
<rect x="297" y="345" width="1" height="38" fill="#000"/>
<rect x="292" y="351" width="11" height="29" fill="#000"/>
<rect x="293" y="352" width="9" height="27" fill="#fff"/>
<rect x="313" y="283" width="1" height="72" fill="#000"/>
<rect x="308" y="294" width="11" height="58" fill="#000"/>
<rect x="309" y="295" width="9" height="56" fill="#fff"/>
<rect x="329" y="262" width="1" height="70" fill="#000"/>
<rect x="324" y="278" width="11" height="17" fill="#000"/>
<rect x="325" y="279" width="9" height="15" fill="#fff"/>
<rect x="345" y="245" width="1" height="114" fill="#000"/>
<rect x="340" y="278" width="11" height="61" fill="#000"/>
<rect x="361" y="309" width="1" height="52" fill="#000"/>
<rect x="356" y="341" width="11" height="9" fill="#000"/>
<rect x="377" y="305" width="1" height="51" fill="#000"/>
<rect x="372" y="320" width="11" height="30" fill="#000"/>
<rect x="373" y="321" width="9" height="28" fill="#fff"/>
<rect x="393" y="304" width="1" height="36" fill="#000"/>
<rect x="388" y="320" width="11" height="15" fill="#000"/>
<rect x="409" y="314" width="1" height="44" fill="#000"/>
<rect x="404" y="316" width="11" height="19" fill="#000"/>
<rect x="405" y="317" width="9" height="17" fill="#fff"/>
<rect x="425" y="271" width="1" height="113" fill="#000"/>
<rect x="420" y="316" width="11" height="34" fill="#000"/>
<rect x="441" y="186" width="1" height="215" fill="#000"/>
<rect x="436" y="280" width="11" height="70" fill="#000"/>
<rect x="437" y="281" width="9" height="68" fill="#fff"/>
<rect x="457" y="222" width="1" height="71" fill="#000"/>
<rect x="452" y="257" width="11" height="22" fill="#000"/>
<rect x="453" y="258" width="9" height="20" fill="#fff"/>
<rect x="473" y="232" width="1" height="43" fill="#000"/>
<rect x="468" y="260" width="11" height="10" fill="#000"/>
<rect x="489" y="238" width="1" height="43" fill="#000"/>
<rect x="484" y="261" width="11" height="9" fill="#000"/>
<rect x="485" y="262" width="9" height="7" fill="#fff"/>
<rect x="505" y="260" width="1" height="32" fill="#000"/>
<rect x="500" y="261" width="11" height="18" fill="#000"/>
<rect x="521" y="231" width="1" height="79" fill="#000"/>
<rect x="516" y="278" width="11" height="4" fill="#000"/>
<rect x="537" y="263" width="1" height="69" fill="#000"/>
<rect x="532" y="268" width="11" height="14" fill="#000"/>
<rect x="533" y="269" width="9" height="12" fill="#fff"/>
<rect x="553" y="227" width="1" height="54" fill="#000"/>
<rect x="548" y="267" width="11" height="14" fill="#000"/>
<rect x="569" y="250" width="1" height="25" fill="#000"/>
<rect x="564" y="257" width="11" height="18" fill="#000"/>
<rect x="565" y="258" width="9" height="16" fill="#fff"/>
<rect x="585" y="254" width="1" height="34" fill="#000"/>
<rect x="580" y="257" width="11" height="19" fill="#000"/>
<rect x="601" y="246" width="1" height="43" fill="#000"/>
<rect x="596" y="258" width="11" height="18" fill="#000"/>
<rect x="597" y="259" width="9" height="16" fill="#fff"/>
<rect x="617" y="240" width="1" height="48" fill="#000"/>
<rect x="612" y="244" width="11" height="15" fill="#000"/>
<rect x="613" y="245" width="9" height="13" fill="#fff"/>
<rect x="633" y="211" width="1" height="48" fill="#000"/>
<rect x="628" y="213" width="11" height="32" fill="#000"/>
<rect x="629" y="214" width="9" height="30" fill="#fff"/>
<rect x="649" y="201" width="1" height="29" fill="#000"/>
<rect x="644" y="213" width="11" height="14" fill="#000"/>
<rect x="665" y="208" width="1" height="20" fill="#000"/>
<rect x="660" y="216" width="11" height="10" fill="#000"/>
<rect x="681" y="207" width="1" height="21" fill="#000"/>
<rect x="676" y="221" width="11" height="4" fill="#000"/>
<rect x="677" y="222" width="9" height="2" fill="#fff"/>
<rect x="697" y="214" width="1" height="16" fill="#000"/>
<rect x="692" y="221" width="11" height="2" fill="#000"/>
<rect x="713" y="198" width="1" height="62" fill="#000"/>
<rect x="708" y="209" width="11" height="14" fill="#000"/>
<rect x="709" y="210" width="9" height="12" fill="#fff"/>
<rect x="729" y="194" width="1" height="62" fill="#000"/>
<rect x="724" y="208" width="11" height="34" fill="#000"/>
<rect x="745" y="220" width="1" height="41" fill="#000"/>
<rect x="740" y="242" width="11" height="16" fill="#000"/>
<rect x="761" y="216" width="1" height="45" fill="#000"/>
<rect x="756" y="220" width="11" height="41" fill="#000"/>
<rect x="757" y="221" width="9" height="39" fill="#fff"/>
<rect x="777" y="213" width="1" height="30" fill="#000"/>
<rect x="772" y="219" width="11" height="11" fill="#000"/>
<rect x="793" y="222" width="1" height="25" fill="#000"/>
<rect x="788" y="228" width="11" height="2" fill="#000"/>
<rect x="809" y="216" width="1" height="58" fill="#000"/>
<rect x="804" y="228" width="11" height="28" fill="#000"/>
<rect x="825" y="163" width="1" height="117" fill="#000"/>
<rect x="820" y="215" width="11" height="42" fill="#000"/>
<rect x="821" y="216" width="9" height="40" fill="#fff"/>
<rect x="841" y="195" width="1" height="50" fill="#000"/>
<rect x="836" y="212" width="11" height="3" fill="#000"/>
<rect x="837" y="213" width="9" height="1" fill="#fff"/>
<rect x="857" y="193" width="1" height="23" fill="#000"/>
<rect x="852" y="198" width="11" height="15" fill="#000"/>
<rect x="853" y="199" width="9" height="13" fill="#fff"/>
<rect x="873" y="174" width="1" height="28" fill="#000"/>
<rect x="868" y="185" width="11" height="14" fill="#000"/>
<rect x="869" y="186" width="9" height="12" fill="#fff"/>
<rect x="889" y="148" width="1" height="58" fill="#000"/>
<rect x="884" y="181" width="11" height="4" fill="#000"/>
<rect x="885" y="182" width="9" height="2" fill="#fff"/>
<rect x="905" y="148" width="1" height="85" fill="#000"/>
<rect x="900" y="158" width="11" height="24" fill="#000"/>
<rect x="901" y="159" width="9" height="22" fill="#fff"/>
<rect x="921" y="130" width="1" height="86" fill="#000"/>
<rect x="916" y="158" width="11" height="40" fill="#000"/>
<rect x="937" y="180" width="1" height="19" fill="#000"/>
<rect x="932" y="193" width="11" height="3" fill="#000"/>
<rect x="933" y="194" width="9" height="1" fill="#fff"/>
<rect x="953" y="186" width="1" height="15" fill="#000"/>
<rect x="948" y="192" width="11" height="8" fill="#000"/>
<rect x="969" y="188" width="1" height="23" fill="#000"/>
<rect x="964" y="199" width="11" height="8" fill="#000"/>
<rect x="985" y="173" width="1" height="39" fill="#000"/>
<rect x="980" y="186" width="11" height="21" fill="#000"/>
<rect x="981" y="187" width="9" height="19" fill="#fff"/>
<rect x="1001" y="178" width="1" height="62" fill="#000"/>
<rect x="996" y="187" width="11" height="20" fill="#000"/>
<rect x="1017" y="176" width="1" height="46" fill="#000"/>
<rect x="1012" y="204" width="11" height="2" fill="#000"/>
</g>
<path d="M1029.5 162.5h7v11h5l-8 8l-8-8h4z" fill="none" stroke="#ff0000" stroke-width="1" shape-rendering="crispEdges"/>
<path d="M1050.5 101h10l-5 5z" fill="#778899" shape-rendering="auto"/>
<rect x="8" y="100" width="1312" height="1" fill="#000"/><rect x="8" y="100" width="1" height="582" fill="#000"/>
<rect x="1319" y="100" width="1" height="582" fill="#000"/><rect x="8" y="681" width="1312" height="1" fill="#000"/>
<rect x="1320" y="114" width="2" height="1" fill="#000"/>
<rect x="1320" y="148" width="2" height="1" fill="#000"/>
<rect x="1320" y="181" width="2" height="1" fill="#000"/>
<rect x="1320" y="214" width="2" height="1" fill="#000"/>
<rect x="1320" y="247" width="2" height="1" fill="#000"/>
<rect x="1320" y="280" width="2" height="1" fill="#000"/>
<rect x="1320" y="313" width="2" height="1" fill="#000"/>
<rect x="1320" y="346" width="2" height="1" fill="#000"/>
<rect x="1320" y="379" width="2" height="1" fill="#000"/>
<rect x="1320" y="413" width="2" height="1" fill="#000"/>
<rect x="1320" y="446" width="2" height="1" fill="#000"/>
<rect x="1320" y="479" width="2" height="1" fill="#000"/>
<rect x="1320" y="512" width="2" height="1" fill="#000"/>
<rect x="1320" y="545" width="2" height="1" fill="#000"/>
<rect x="1320" y="578" width="2" height="1" fill="#000"/>
<rect x="1320" y="611" width="2" height="1" fill="#000"/>
<rect x="1320" y="644" width="2" height="1" fill="#000"/>
<rect x="1320" y="677" width="2" height="1" fill="#000"/>
<rect x="9" y="682" width="1" height="3" fill="#000"/>
<rect x="73" y="682" width="1" height="3" fill="#000"/>
<rect x="137" y="682" width="1" height="3" fill="#000"/>
<rect x="201" y="682" width="1" height="3" fill="#000"/>
<rect x="265" y="682" width="1" height="3" fill="#000"/>
<rect x="329" y="682" width="1" height="3" fill="#000"/>
<rect x="393" y="682" width="1" height="3" fill="#000"/>
<rect x="457" y="682" width="1" height="3" fill="#000"/>
<rect x="521" y="682" width="1" height="3" fill="#000"/>
<rect x="585" y="682" width="1" height="3" fill="#000"/>
<rect x="649" y="682" width="1" height="3" fill="#000"/>
<rect x="713" y="682" width="1" height="3" fill="#000"/>
<rect x="777" y="682" width="1" height="3" fill="#000"/>
<rect x="841" y="682" width="1" height="3" fill="#000"/>
<rect x="905" y="682" width="1" height="3" fill="#000"/>
<rect x="969" y="682" width="1" height="3" fill="#000"/>
<rect x="1320" y="182" width="2" height="2" fill="#0000ff"/>
<rect x="1322" y="177" width="39" height="11" fill="#0000ff"/>
<rect x="1322" y="198" width="39" height="11" fill="#000"/>
<path d="M12 107h7l-3.5 4z" fill="#000" shape-rendering="auto"/>
</svg>
<span class="t" style="left:1325.60px;top:109px;font-size:10px;color:#000;transform:scale(0.8687,0.98);transform-origin:0 8px;">1.10585</span>
<span class="t" style="left:1325.60px;top:143px;font-size:10px;color:#000;transform:scale(0.8687,0.98);transform-origin:0 8px;">1.10470</span>
<span class="t" style="left:1325.60px;top:209px;font-size:10px;color:#000;transform:scale(0.8687,0.98);transform-origin:0 8px;">1.10240</span>
<span class="t" style="left:1325.60px;top:242px;font-size:10px;color:#000;transform:scale(0.8687,0.98);transform-origin:0 8px;">1.10125</span>
<span class="t" style="left:1325.60px;top:275px;font-size:10px;color:#000;transform:scale(0.8687,0.98);transform-origin:0 8px;">1.10010</span>
<span class="t" style="left:1325.60px;top:308px;font-size:10px;color:#000;transform:scale(0.8687,0.98);transform-origin:0 8px;">1.09895</span>
<span class="t" style="left:1325.60px;top:341px;font-size:10px;color:#000;transform:scale(0.8687,0.98);transform-origin:0 8px;">1.09780</span>
<span class="t" style="left:1325.60px;top:374px;font-size:10px;color:#000;transform:scale(0.8687,0.98);transform-origin:0 8px;">1.09665</span>
<span class="t" style="left:1325.60px;top:408px;font-size:10px;color:#000;transform:scale(0.8687,0.98);transform-origin:0 8px;">1.09550</span>
<span class="t" style="left:1325.60px;top:441px;font-size:10px;color:#000;transform:scale(0.8687,0.98);transform-origin:0 8px;">1.09435</span>
<span class="t" style="left:1325.60px;top:474px;font-size:10px;color:#000;transform:scale(0.8687,0.98);transform-origin:0 8px;">1.09320</span>
<span class="t" style="left:1325.60px;top:507px;font-size:10px;color:#000;transform:scale(0.8687,0.98);transform-origin:0 8px;">1.09205</span>
<span class="t" style="left:1325.60px;top:540px;font-size:10px;color:#000;transform:scale(0.8687,0.98);transform-origin:0 8px;">1.09090</span>
<span class="t" style="left:1325.60px;top:573px;font-size:10px;color:#000;transform:scale(0.8687,0.98);transform-origin:0 8px;">1.08975</span>
<span class="t" style="left:1325.60px;top:606px;font-size:10px;color:#000;transform:scale(0.8687,0.98);transform-origin:0 8px;">1.08860</span>
<span class="t" style="left:1325.60px;top:639px;font-size:10px;color:#000;transform:scale(0.8687,0.98);transform-origin:0 8px;">1.08745</span>
<span class="t" style="left:1325.60px;top:672px;font-size:10px;color:#000;transform:scale(0.8687,0.98);transform-origin:0 8px;">1.08630</span>
<span class="t" style="left:1325.60px;top:178px;font-size:10px;color:#fff;transform:scale(0.8687,0.98);transform-origin:0 8px;">1.10346</span>
<span class="t" style="left:1325.60px;top:199px;font-size:10px;color:#fff;transform:scale(0.8687,0.98);transform-origin:0 8px;">1.10275</span>
<span class="t" style="left:8.30px;top:685px;font-size:10px;color:#000;transform:scale(0.9305,0.98);transform-origin:0 8px;">10 Apr 2014</span>
<span class="t" style="left:72.30px;top:685px;font-size:10px;color:#000;transform:scale(0.9290,0.98);transform-origin:0 8px;">10 Apr 20:00</span>
<span class="t" style="left:136.30px;top:685px;font-size:10px;color:#000;transform:scale(0.9412,0.98);transform-origin:0 8px;">11 Apr 12:00</span>
<span class="t" style="left:200.30px;top:685px;font-size:10px;color:#000;transform:scale(0.9290,0.98);transform-origin:0 8px;">14 Apr 04:00</span>
<span class="t" style="left:264.30px;top:685px;font-size:10px;color:#000;transform:scale(0.9290,0.98);transform-origin:0 8px;">14 Apr 20:00</span>
<span class="t" style="left:328.30px;top:685px;font-size:10px;color:#000;transform:scale(0.9290,0.98);transform-origin:0 8px;">15 Apr 12:00</span>
<span class="t" style="left:392.30px;top:685px;font-size:10px;color:#000;transform:scale(0.9290,0.98);transform-origin:0 8px;">16 Apr 04:00</span>
<span class="t" style="left:456.30px;top:685px;font-size:10px;color:#000;transform:scale(0.9290,0.98);transform-origin:0 8px;">16 Apr 20:00</span>
<span class="t" style="left:520.30px;top:685px;font-size:10px;color:#000;transform:scale(0.9290,0.98);transform-origin:0 8px;">17 Apr 12:00</span>
<span class="t" style="left:584.30px;top:685px;font-size:10px;color:#000;transform:scale(0.9290,0.98);transform-origin:0 8px;">18 Apr 04:00</span>
<span class="t" style="left:648.30px;top:685px;font-size:10px;color:#000;transform:scale(0.9290,0.98);transform-origin:0 8px;">18 Apr 20:00</span>
<span class="t" style="left:712.30px;top:685px;font-size:10px;color:#000;transform:scale(0.9290,0.98);transform-origin:0 8px;">21 Apr 12:00</span>
<span class="t" style="left:776.30px;top:685px;font-size:10px;color:#000;transform:scale(0.9290,0.98);transform-origin:0 8px;">22 Apr 04:00</span>
<span class="t" style="left:840.30px;top:685px;font-size:10px;color:#000;transform:scale(0.9290,0.98);transform-origin:0 8px;">22 Apr 20:00</span>
<span class="t" style="left:904.30px;top:685px;font-size:10px;color:#000;transform:scale(0.9290,0.98);transform-origin:0 8px;">23 Apr 12:00</span>
<span class="t" style="left:968.30px;top:685px;font-size:10px;color:#000;transform:scale(0.9290,0.98);transform-origin:0 8px;">24 Apr 04:00</span>
<span class="t" style="left:23.20px;top:104px;font-size:10px;color:#000;transform:scale(0.9829,0.98);transform-origin:0 8px;">USDCAD,H4</span>
<span class="t" style="left:86.20px;top:104px;font-size:10px;color:#000;transform:scale(0.9109,0.98);transform-origin:0 8px;">1.10269 1.10371 1.10215 1.10275</span>
<div class="hl" style="left:4px;top:701px;width:1360px;background:#000"></div>
<div class="vl" style="left:4px;top:702px;height:19px;background:#808080"></div><div class="vl" style="left:5px;top:702px;height:19px;background:#404040"></div>
<div class="hl" style="left:4px;top:721px;width:1360px;background:#fff"></div>
<div class="abs" style="left:720px;top:701px;width:81px;height:19px;background:#fff;box-sizing:border-box;border:1px solid #000;border-top-color:#fff"></div>
<span class="t" style="left:18.80px;top:705px;font-size:11px;color:#404040;letter-spacing:-1.021px;">EURUSD,H1</span>
<span class="t" style="left:97.50px;top:705px;font-size:11px;color:#404040;letter-spacing:-0.934px;">GBPUSD,M30</span>
<span class="t" style="left:182.50px;top:705px;font-size:11px;color:#404040;letter-spacing:-0.725px;">EURJPY,H4</span>
<span class="t" style="left:258.20px;top:705px;font-size:11px;color:#404040;letter-spacing:-0.679px;">EURCHF,H4</span>
<span class="t" style="left:338.50px;top:705px;font-size:11px;color:#404040;letter-spacing:-0.707px;">EURGBP,H4</span>
<span class="t" style="left:418.80px;top:705px;font-size:11px;color:#404040;letter-spacing:-0.819px;">AUDNZD,H1</span>
<span class="t" style="left:498.20px;top:705px;font-size:11px;color:#404040;letter-spacing:-0.813px;">GBPJPY,H4</span>
<span class="t" style="left:574.50px;top:705px;font-size:11px;color:#404040;letter-spacing:-0.679px;">USDCHF,H4</span>
<span class="t" style="left:654.50px;top:705px;font-size:11px;color:#404040;letter-spacing:-0.675px;">USDJPY,H4</span>
<span class="t" style="left:730.20px;top:705px;font-size:11px;color:#000;letter-spacing:-0.746px;">USDCAD,H4</span>
<span class="t" style="left:811.50px;top:705px;font-size:11px;color:#404040;letter-spacing:-0.779px;">GBPCHF,H4</span>
<span class="t" style="left:890.80px;top:705px;font-size:11px;color:#404040;letter-spacing:-0.771px;">AUDUSD,H4</span>
<span class="t" style="left:970.20px;top:705px;font-size:11px;color:#404040;letter-spacing:-0.831px;">NZDUSD,H1</span>
<span class="t" style="left:1050.00px;top:705px;font-size:11px;color:#404040;letter-spacing:-0.807px;">XAUUSD,H1</span>
<div class="vl" style="left:88px;top:704px;height:13px;background:#404040"></div>
<div class="vl" style="left:172px;top:704px;height:13px;background:#404040"></div>
<div class="vl" style="left:248px;top:704px;height:13px;background:#404040"></div>
<div class="vl" style="left:328px;top:704px;height:13px;background:#404040"></div>
<div class="vl" style="left:408px;top:704px;height:13px;background:#404040"></div>
<div class="vl" style="left:488px;top:704px;height:13px;background:#404040"></div>
<div class="vl" style="left:564px;top:704px;height:13px;background:#404040"></div>
<div class="vl" style="left:644px;top:704px;height:13px;background:#404040"></div>
<div class="vl" style="left:880px;top:704px;height:13px;background:#404040"></div>
<div class="vl" style="left:960px;top:704px;height:13px;background:#404040"></div>
<div class="vl" style="left:1040px;top:704px;height:13px;background:#404040"></div>
<div class="vl" style="left:1120px;top:704px;height:13px;background:#404040"></div>
<div class="abs" style="left:1337px;top:707px;width:0;height:0;border-top:4px solid transparent;border-bottom:4px solid transparent;border-right:4px solid #808080"></div>
<div class="abs" style="left:1354px;top:707px;width:0;height:0;border-top:4px solid transparent;border-bottom:4px solid transparent;border-left:4px solid #808080"></div>
<div class="hl" style="left:4px;top:743px;width:1360px;background:#fff"></div>
<span class="t" style="left:6.00px;top:728px;font-size:11px;color:#000;letter-spacing:-0.279px;">Äëÿ ñïðàâêè, íàæìèòå F1</span>
<div class="sep" style="left:643px;top:724px;height:17px"></div>
<div class="sep" style="left:752px;top:724px;height:17px"></div>
<div class="sep" style="left:853px;top:724px;height:17px"></div>
<div class="sep" style="left:925px;top:724px;height:17px"></div>
<div class="sep" style="left:996px;top:724px;height:17px"></div>
<div class="sep" style="left:1065px;top:724px;height:17px"></div>
<div class="sep" style="left:1136px;top:724px;height:17px"></div>
<div class="sep" style="left:1202px;top:724px;height:17px"></div>
<span class="t" style="left:649.00px;top:728px;font-size:11px;color:#000;letter-spacing:-0.142px;">Default</span>
<span class="t" style="left:757.80px;top:728px;font-size:11px;color:#000;letter-spacing:0.038px;">2014.04.23 20:00</span>
<span class="t" style="left:858.50px;top:728px;font-size:11px;color:#000;letter-spacing:-0.015px;">O: 1.10305</span>
<span class="t" style="left:930.00px;top:728px;font-size:11px;color:#000;letter-spacing:0.020px;">H: 1.10359</span>
<span class="t" style="left:1001.50px;top:728px;font-size:11px;color:#000;letter-spacing:-0.188px;">L: 1.10291</span>
<span class="t" style="left:1070.50px;top:728px;font-size:11px;color:#000;letter-spacing:-0.035px;">C: 1.10313</span>
<span class="t" style="left:1141.50px;top:728px;font-size:11px;color:#000;letter-spacing:-0.252px;">V: 2787</span>
<span class="t" style="left:1257.00px;top:728px;font-size:11px;color:#000;letter-spacing:-0.165px;">3501/4 kb</span>
<svg class="ic" style="left:1208px;top:727px" width="24" height="13" viewBox="0 0 24 13"><g shape-rendering="crispEdges"><rect x="0" y="0" width="2" height="10" fill="#5a7a0a"/><rect x="0" y="10" width="2" height="2" fill="#b01010"/><rect x="3" y="0" width="2" height="9" fill="#5a7a0a"/><rect x="3" y="9" width="2" height="3" fill="#b01010"/><rect x="6" y="0" width="2" height="8" fill="#5a7a0a"/><rect x="6" y="8" width="2" height="4" fill="#b01010"/><rect x="9" y="0" width="2" height="6" fill="#5a7a0a"/><rect x="9" y="6" width="2" height="6" fill="#b01010"/><rect x="12" y="0" width="2" height="5" fill="#5a7a0a"/><rect x="12" y="5" width="2" height="7" fill="#b01010"/><rect x="15" y="0" width="2" height="4" fill="#5a7a0a"/><rect x="15" y="4" width="2" height="8" fill="#b01010"/><rect x="18" y="0" width="2" height="3" fill="#5a7a0a"/><rect x="18" y="3" width="2" height="9" fill="#b01010"/><rect x="21" y="0" width="2" height="2" fill="#5a7a0a"/><rect x="21" y="2" width="2" height="10" fill="#b01010"/></g></svg>
<svg class="ic" style="left:1348px;top:727px" width="15" height="15" viewBox="0 0 15 15"><g stroke="#808080" stroke-width="1.500"><path d="M15 1L1 15M15 5L5 15M15 9L9 15M15 13L13 15"/></g><g stroke="#fff" stroke-width="1"><path d="M15 2.300L2.300 15M15 6.300L6.300 15M15 10.300L10.300 15"/></g></svg>
</body></html>
